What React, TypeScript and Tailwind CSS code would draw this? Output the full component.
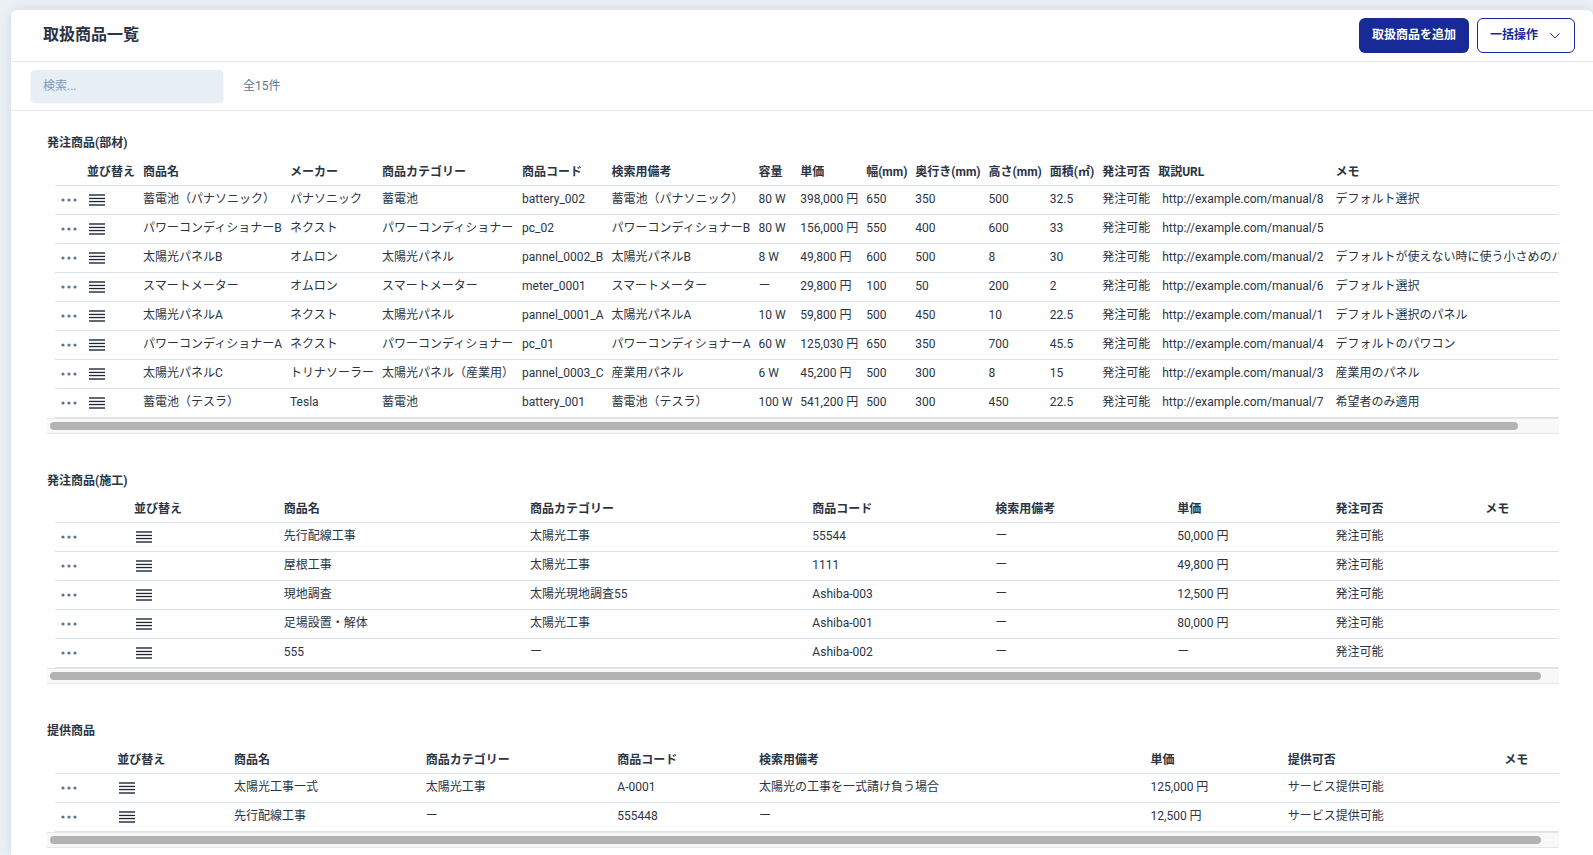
import { useState } from 'react'

interface Column {
  key: string
  label: string
}

type Row = Record<string, string>

interface Group {
  title: string
  columns: Column[]
  rows: Row[]
}

const BASE: Column[] = [
  { key: 'category', label: '商品カテゴリー' },
  { key: 'code', label: '商品コード' },
  { key: 'note', label: '検索用備考' },
]

const part = (
  name: string, maker: string, category: string, code: string, note: string, capacity: string, price: string,
  width: string, depth: string, height: string, area: string, manual: string, memo: string,
): Row => ({
  name, maker, category, code, note, capacity, price, width, depth, height, area,
  status: '発注可能', url: `http://example.com/manual/${manual}`, memo,
})

const item = (name: string, category: string, code: string, note: string, price: string, status: string): Row => ({
  name, category, code, note, price, status, memo: '',
})

const GROUPS: Group[] = [
  {
    title: '発注商品(部材)',
    columns: [
      { key: 'name', label: '商品名' },
      { key: 'maker', label: 'メーカー' },
      ...BASE,
      { key: 'capacity', label: '容量' },
      { key: 'price', label: '単価' },
      { key: 'width', label: '幅(mm)' },
      { key: 'depth', label: '奥行き(mm)' },
      { key: 'height', label: '高さ(mm)' },
      { key: 'area', label: '面積(㎡)' },
      { key: 'status', label: '発注可否' },
      { key: 'url', label: '取説URL' },
      { key: 'memo', label: 'メモ' },
    ],
    rows: [
      part('蓄電池（パナソニック）', 'パナソニック', '蓄電池', 'battery_002', '蓄電池（パナソニック）', '80 W', '398,000 円', '650', '350', '500', '32.5', '8', 'デフォルト選択'),
      part('パワーコンディショナーB', 'ネクスト', 'パワーコンディショナー', 'pc_02', 'パワーコンディショナーB', '80 W', '156,000 円', '550', '400', '600', '33', '5', ''),
      part('太陽光パネルB', 'オムロン', '太陽光パネル', 'pannel_0002_B', '太陽光パネルB', '8 W', '49,800 円', '600', '500', '8', '30', '2', 'デフォルトが使えない時に使う小さめのパネル'),
      part('スマートメーター', 'オムロン', 'スマートメーター', 'meter_0001', 'スマートメーター', 'ー', '29,800 円', '100', '50', '200', '2', '6', 'デフォルト選択'),
      part('太陽光パネルA', 'ネクスト', '太陽光パネル', 'pannel_0001_A', '太陽光パネルA', '10 W', '59,800 円', '500', '450', '10', '22.5', '1', 'デフォルト選択のパネル'),
      part('パワーコンディショナーA', 'ネクスト', 'パワーコンディショナー', 'pc_01', 'パワーコンディショナーA', '60 W', '125,030 円', '650', '350', '700', '45.5', '4', 'デフォルトのパワコン'),
      part('太陽光パネルC', 'トリナソーラー', '太陽光パネル（産業用）', 'pannel_0003_C', '産業用パネル', '6 W', '45,200 円', '500', '300', '8', '15', '3', '産業用のパネル'),
      part('蓄電池（テスラ）', 'Tesla', '蓄電池', 'battery_001', '蓄電池（テスラ）', '100 W', '541,200 円', '500', '300', '450', '22.5', '7', '希望者のみ適用'),
    ],
  },
  {
    title: '発注商品(施工)',
    columns: [
      { key: 'name', label: '商品名' },
      ...BASE,
      { key: 'price', label: '単価' },
      { key: 'status', label: '発注可否' },
      { key: 'memo', label: 'メモ' },
    ],
    rows: [
      item('先行配線工事', '太陽光工事', '55544', 'ー', '50,000 円', '発注可能'),
      item('屋根工事', '太陽光工事', '1111', 'ー', '49,800 円', '発注可能'),
      item('現地調査', '太陽光現地調査55', 'Ashiba-003', 'ー', '12,500 円', '発注可能'),
      item('足場設置・解体', '太陽光工事', 'Ashiba-001', 'ー', '80,000 円', '発注可能'),
      item('555', 'ー', 'Ashiba-002', 'ー', 'ー', '発注可能'),
    ],
  },
  {
    title: '提供商品',
    columns: [
      { key: 'name', label: '商品名' },
      ...BASE,
      { key: 'price', label: '単価' },
      { key: 'status', label: '提供可否' },
      { key: 'memo', label: 'メモ' },
    ],
    rows: [
      item('太陽光工事一式', '太陽光工事', 'A-0001', '太陽光の工事を一式請け負う場合', '125,000 円', 'サービス提供可能'),
      item('先行配線工事', 'ー', '555448', 'ー', '12,500 円', 'サービス提供可能'),
    ],
  },
]

function DotsIcon() {
  return (
    <svg width="16" height="4" viewBox="0 0 16 4" fill="#5f7391">
      <circle cx="2" cy="2" r="1.6" />
      <circle cx="8" cy="2" r="1.6" />
      <circle cx="14" cy="2" r="1.6" />
    </svg>
  )
}

function HandleIcon() {
  return (
    <svg width="16" height="12" viewBox="0 0 16 12" fill="#1f2838">
      <rect y="0.3" width="16" height="1.4" />
      <rect y="3.8" width="16" height="1.3" />
      <rect y="6.9" width="16" height="1.3" />
      <rect y="10.3" width="16" height="1.4" />
    </svg>
  )
}

function ProductTable({ group }: { group: Group }) {
  const wide = group.columns.length > 10

  return (
    <section className="mb-[39px]">
      <h2 className="text-xs leading-4 font-bold">{group.title}</h2>
      <div className="mt-2 overflow-x-hidden">
        <table className="mx-2 w-full border-collapse text-left text-xs leading-4 whitespace-nowrap">
          <thead>
            <tr className="h-[26px] border-b border-[#dbe1ea]">
              <th className="px-1" aria-label="操作" />
              <th className="px-1 font-bold">並び替え</th>
              {group.columns.map(c => (
                <th key={c.key} className="px-1 font-bold">{c.label}</th>
              ))}
            </tr>
          </thead>
          <tbody>
            {group.rows.map(row => (
              <tr key={row.code} className="h-[29px] border-b border-[#dbe1ea]">
                <td className="px-1">
                  <button type="button" aria-label={`${row.name}のメニュー`} className="flex h-4 w-5 items-center justify-center">
                    <DotsIcon />
                  </button>
                </td>
                <td className="px-1">
                  <button type="button" aria-label={`${row.name}を並び替え`} className="flex h-4 w-5 cursor-grab items-center justify-center">
                    <HandleIcon />
                  </button>
                </td>
                {group.columns.map(c => (
                  <td key={c.key} className="px-1 pb-0.5">
                    {c.key === 'url' ? <a href={row.url} className="px-1">{row.url}</a> : row[c.key]}
                  </td>
                ))}
              </tr>
            ))}
          </tbody>
        </table>
      </div>
      {/* Scroll track */}
      <div className="border-y border-[#e4e6ea] bg-[#f8f8f8] px-[3px] py-[3px]">
        <div className={`h-2 rounded-full bg-[#b3b3b3] ${wide ? 'w-[97.5%]' : 'w-[99%]'}`} />
      </div>
    </section>
  )
}

export default function App() {
  const [query, setQuery] = useState('')
  const groups = GROUPS.map(g => ({ ...g, rows: g.rows.filter(r => r.name.includes(query)) }))
  const total = groups.reduce((n, g) => n + g.rows.length, 0)

  return (
    <div className="h-screen overflow-hidden bg-[#ebf0f4] pt-2.5 pl-[11px] font-[Roboto,'Noto_Sans_CJK_JP',sans-serif] text-[#2b3444]">
      <main className="min-h-full rounded-t-md bg-white shadow-[0_0_12px_rgba(40,60,90,0.12)]">
        {/* Title bar */}
        <header className="flex h-13 items-center justify-between border-b border-[#e6ebf1] pr-[18px] pl-8">
          <h1 className="pb-0.5 text-base leading-6 font-bold">取扱商品一覧</h1>
          <div className="flex gap-2">
            <button type="button" className="h-[35px] rounded-md bg-[#172a98] px-[13px] pb-0.5 text-xs font-bold text-white">
              取扱商品を追加
            </button>
            <button type="button" className="flex h-[35px] items-center gap-3 rounded-md border border-[#172a98] pr-3.5 pl-3 text-xs font-bold text-[#172a98]">
              <span className="pb-0.5">一括操作</span>
              <svg width="10" height="6" viewBox="0 0 10 6" fill="none" stroke="currentColor">
                <path d="M0.5 0.5 5 5 9.5 0.5" />
              </svg>
            </button>
          </div>
        </header>

        {/* Search */}
        <div className="flex h-[49px] items-center gap-5 border-b border-[#e6ebf1] px-5">
          <input
            type="search"
            aria-label="検索"
            placeholder="検索..."
            value={query}
            onChange={e => setQuery(e.target.value)}
            className="h-8 w-48 rounded-sm bg-[#e7eef5] px-3 text-xs shadow-[0_1px_2px_rgba(40,60,90,0.12)] outline-none placeholder:text-[#7e9bbb]"
          />
          <span className="text-xs text-[#5f7391]">全{total}件</span>
        </div>

        <div className="pt-6 pr-[34px] pl-9">
          {groups.map(g => (
            <ProductTable key={g.title} group={g} />
          ))}
        </div>
      </main>
    </div>
  )
}
